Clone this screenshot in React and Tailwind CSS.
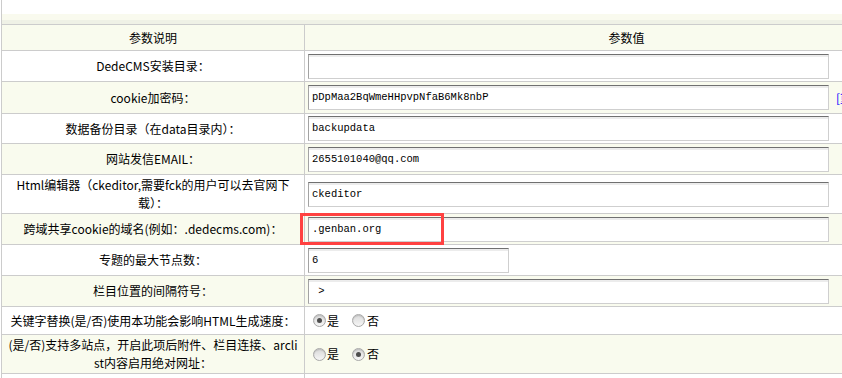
import React from "react";

const F = "font-['Noto_Sans_CJK_SC','Noto_Sans',sans-serif]";
const M = "font-['Liberation_Mono','Noto_Sans_CJK_SC',monospace]";

function Input({ value, short }) {
  return (
    <div
      className={
        "ml-[3px] h-[25px] shrink-0 border border-[#cfcfcf] border-t-[#707070] border-l-[#a3a3a3] bg-white shadow-[inset_0_2px_0_#ececec] flex items-center pl-[3px] pt-[1px] text-[10.5px] text-black whitespace-pre " +
        M +
        (short ? " w-[201px]" : " w-[521px]")
      }
    >
      {value}
    </div>
  );
}

function Radio({ checked }) {
  return (
    <span className="relative inline-flex w-[13px] h-[13px] rounded-full border border-[#a8a8a8] bg-gradient-to-b from-[#d9d9d9] to-[#f6f6f6] items-center justify-center shadow-[inset_0_1px_1px_#bdbdbd]">
      {checked && <span className="w-[5px] h-[5px] rounded-full bg-[#4d4d4d]" />}
    </span>
  );
}

function Radios({ yes }) {
  return (
    <div className={"flex items-center pl-[8px] text-[12px] text-black " + F}>
      <Radio checked={yes} />
      <span className="ml-[1px] leading-none">是</span>
      <span className="ml-[13px] flex">
        <Radio checked={!yes} />
      </span>
      <span className="ml-[2px] leading-none">否</span>
    </div>
  );
}

function Row({ h, alt, label, children }) {
  return (
    <div
      className={
        "flex border-b border-[#cccccc] " +
        h +
        (alt ? " bg-[#f9fbee]" : " bg-white")
      }
    >
      <div
        className={
          "w-[303px] shrink-0 border-r border-[#cccccc] flex items-center justify-center text-center text-[12px] leading-[18px] text-black whitespace-nowrap " +
          F
        }
      >
        <div>{label}</div>
      </div>
      <div className="flex-1 flex items-center">{children}</div>
    </div>
  );
}

export default function App() {
  return (
    <div className="relative w-[842px] h-[378px] overflow-hidden bg-white">
      <div className="ml-px w-[947px] border-l border-[#cccccc] min-h-[378px]">
        <div className="h-[14px] bg-white" />
        <div className="h-[6px] bg-[#f9faee]" />
        <div className="h-[4px] bg-[#eff1e6]" />
        <div
          className={
            "flex h-[27px] border-t border-b border-[#cccccc] bg-[#f9fbee] text-[12px] text-black " +
            F
          }
        >
          <div className="w-[303px] shrink-0 border-r border-[#cccccc] flex items-center justify-center">
            参数说明
          </div>
          <div className="flex-1 flex items-center justify-center">参数值</div>
        </div>

        <Row h="h-[31px]" label="DedeCMS安装目录：">
          <Input value="" />
        </Row>
        <Row h="h-[32px]" alt label="cookie加密码：">
          <Input value="pDpMaa2BqWmeHHpvpNfaB6Mk8nbP" />
          <span className={"ml-[7px] text-[12px] text-[#0000ff] whitespace-nowrap " + F}>
            [重置]
          </span>
        </Row>
        <Row h="h-[30px]" label="数据备份目录（在data目录内）：">
          <Input value="backupdata" />
        </Row>
        <Row h="h-[31px]" alt label="网站发信EMAIL：">
          <Input value="2655101040@qq.com" />
        </Row>
        <Row
          h="h-[39px]"
          label={
            <>
              Html编辑器（ckeditor,需要fck的用户可以去官网下
              <br />
              载）：
            </>
          }
        >
          <Input value="ckeditor" />
        </Row>
        <Row h="h-[31px]" alt label="跨域共享cookie的域名(例如：.dedecms.com)：">
          <Input value=".genban.org" />
        </Row>
        <Row h="h-[31px]" label="专题的最大节点数：">
          <Input value="6" short />
        </Row>
        <Row h="h-[31px]" alt label="栏目位置的间隔符号：">
          <Input value=" >" />
        </Row>
        <Row h="h-[28px]" label="关键字替换(是/否)使用本功能会影响HTML生成速度：">
          <Radios yes />
        </Row>
        <Row
          h="h-[39px]"
          alt
          label={
            <>
              (是/否)支持多站点，开启此项后附件、栏目连接、arcli
              <br />
              st内容启用绝对网址：
            </>
          }
        >
          <Radios yes={false} />
        </Row>
        <div className="flex h-[40px] bg-white">
          <div className="w-[303px] shrink-0 border-r border-[#cccccc]" />
          <div className="flex-1" />
        </div>
      </div>

      <div className="absolute left-[300px] top-[213px] w-[144px] h-[32px] border-[3px] border-[#ff4141] pointer-events-none" />
    </div>
  );
}
